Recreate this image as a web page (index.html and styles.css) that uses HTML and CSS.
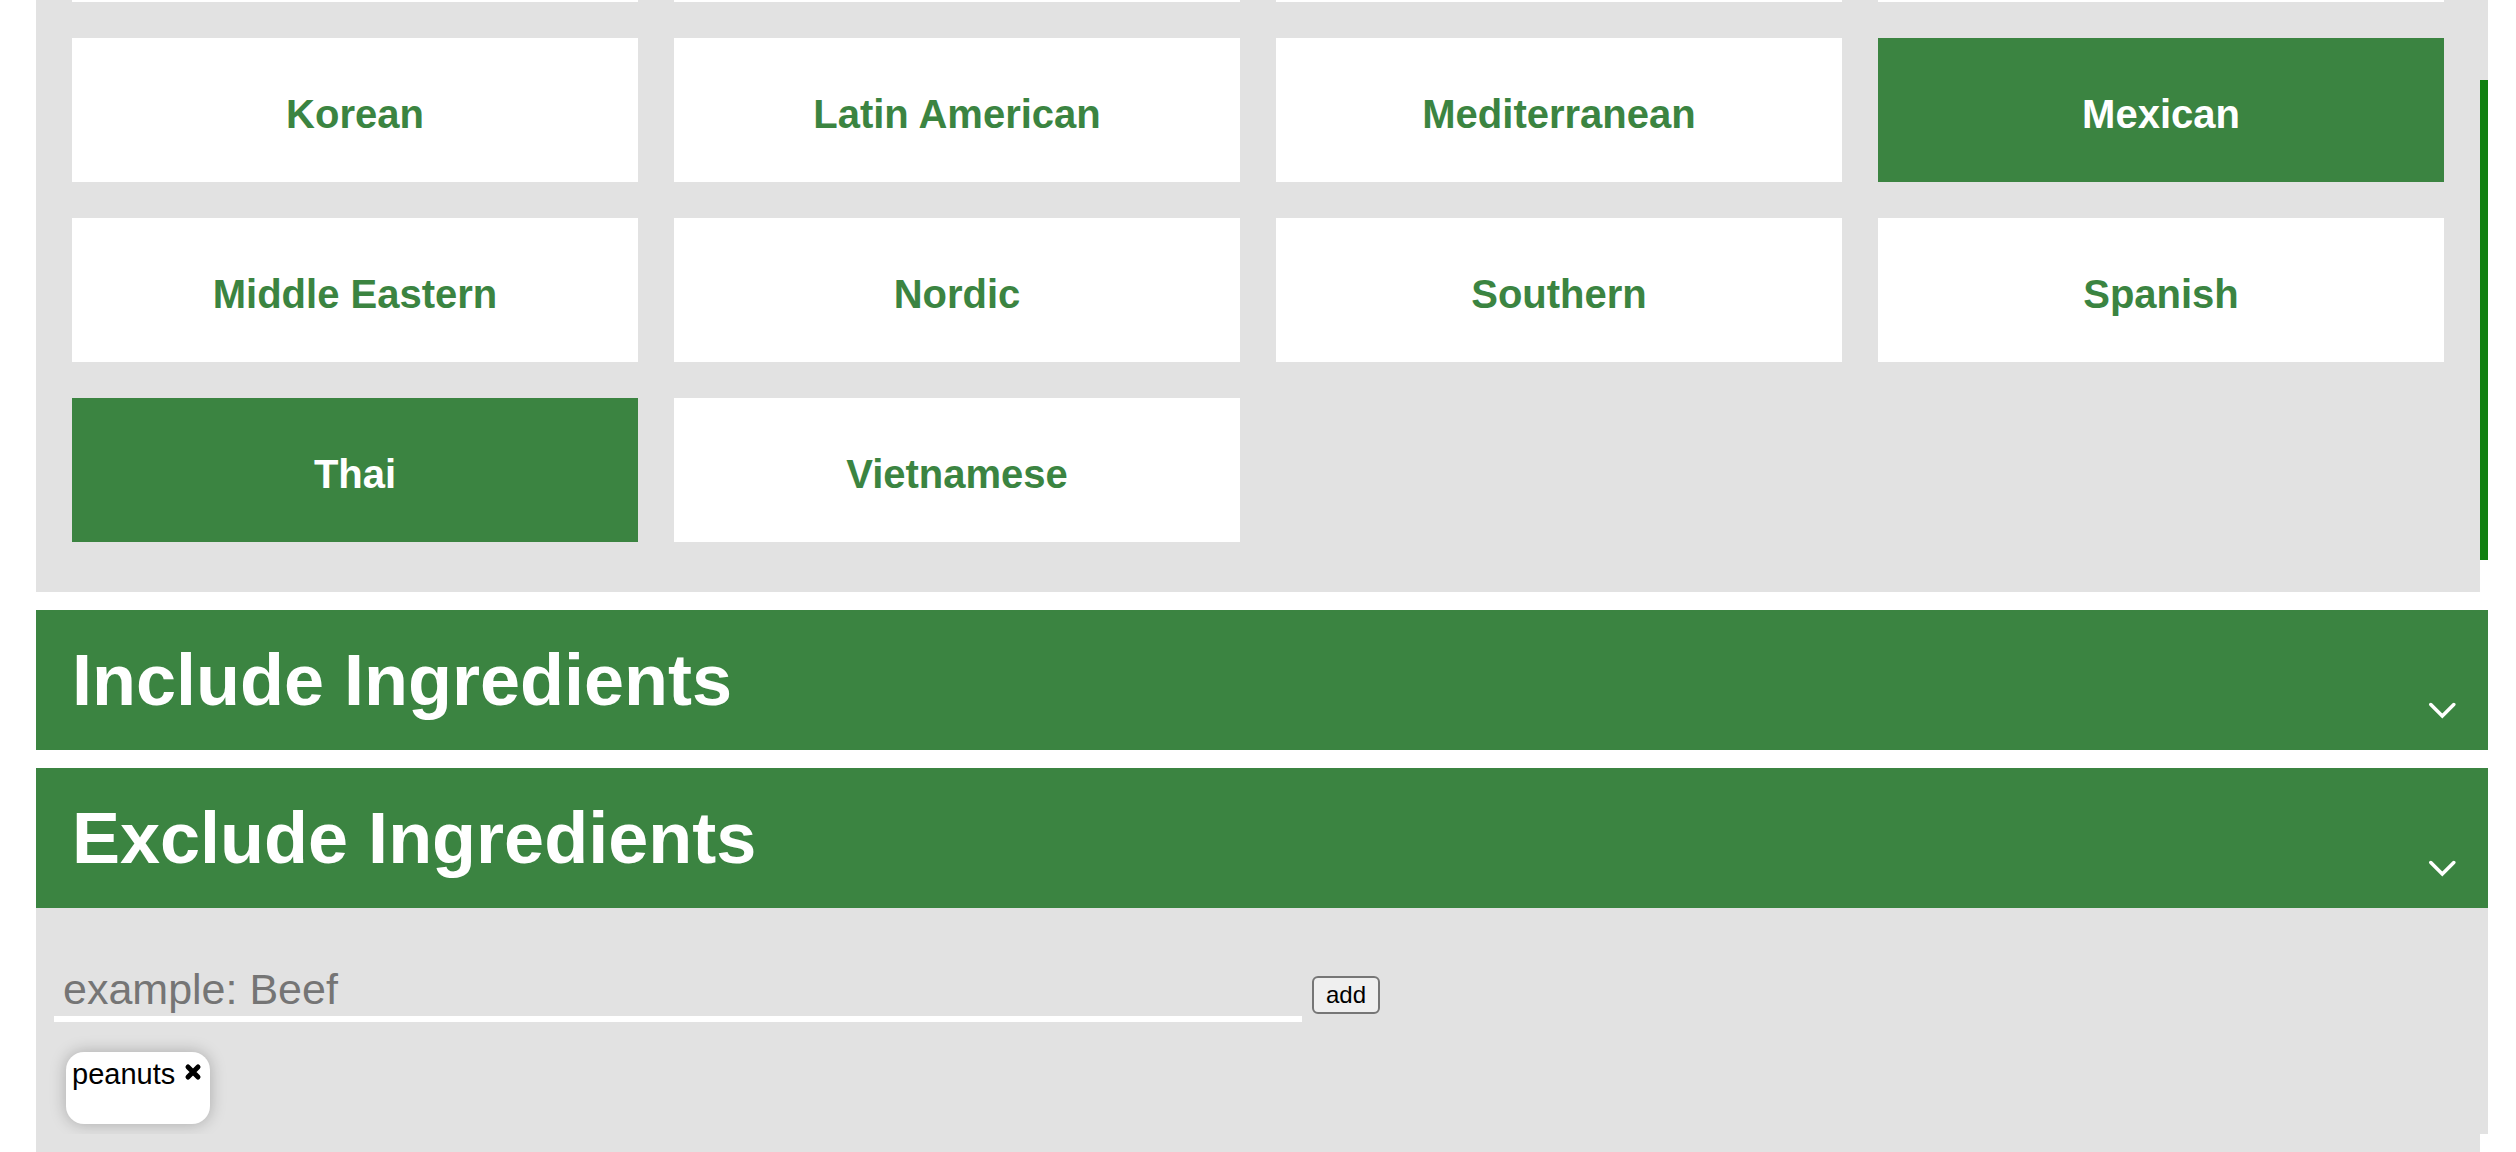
FILE: index.html
```html
<!DOCTYPE html>
<html lang="en">
<head>
<meta charset="utf-8">
<title>Recipe filters</title>
<link rel="stylesheet" href="styles.css">
</head>
<body>
<main class="filters">
  <section class="cuisines">
    <div class="cuisine-grid">
      <div class="card-edge"></div>
      <div class="card-edge"></div>
      <div class="card-edge"></div>
      <div class="card-edge"></div>
      <button type="button" class="card">Korean</button>
      <button type="button" class="card">Latin American</button>
      <button type="button" class="card">Mediterranean</button>
      <button type="button" class="card selected" aria-pressed="true">Mexican</button>
      <button type="button" class="card">Middle Eastern</button>
      <button type="button" class="card">Nordic</button>
      <button type="button" class="card">Southern</button>
      <button type="button" class="card">Spanish</button>
      <button type="button" class="card selected" aria-pressed="true">Thai</button>
      <button type="button" class="card">Vietnamese</button>
    </div>
    <div class="scroll-track"><div class="scroll-thumb"></div></div>
  </section>

  <section>
    <button type="button" class="accordion">
      <span class="accordion-title">Include Ingredients</span>
      <svg class="chevron" viewBox="0 0 28 20" aria-hidden="true"><path d="M2.800 3.500 L14.300 15 L25.800 3.500"/></svg>
    </button>
  </section>

  <section class="exclude">
    <button type="button" class="accordion" aria-expanded="true">
      <span class="accordion-title">Exclude Ingredients</span>
      <svg class="chevron" viewBox="0 0 28 20" aria-hidden="true"><path d="M2.800 3.500 L14.300 15 L25.800 3.500"/></svg>
    </button>
    <div class="exclude-body">
      <form class="add-form">
        <input class="ingredient" type="text" placeholder="example: Beef" aria-label="Ingredient to exclude">
        <button type="button" class="add">add</button>
      </form>
      <div class="chip">
        <span>peanuts</span>
        <button type="button" class="remove" aria-label="Remove">
          <svg class="cross" viewBox="0 0 18 18" aria-hidden="true"><path d="M4 4 L14 14 M14 4 L4 14"/></svg>
        </button>
      </div>
    </div>
    <div class="exclude-foot"></div>
  </section>
</main>
</body>
</html>
```
FILE: styles.css
```css
* {
  box-sizing: border-box;
}

body {
  margin: 0;
  background: #fff;
  font-family: "Liberation Sans", Arial, sans-serif;
}

button {
  font-family: inherit;
}

.filters {
  display: flex;
  flex-direction: column;
  gap: 18px;
  min-height: 100vh;
  padding: 0 28px 0 36px;
}

.cuisines {
  display: flex;
}

.cuisine-grid {
  flex: 1;
  display: grid;
  grid-template-columns: repeat(4, 1fr);
  gap: 36px;
  padding: 0 36px 50px;
  background: #e2e2e2;
}

.card-edge {
  height: 2px;
  background: #fff;
}

.card {
  padding: 53px 16px 45px;
  border: 0;
  background: #fff;
  color: #3b8441;
  font-size: 40px;
  font-weight: bold;
  line-height: 46px;
}

.card.selected {
  background: #3b8441;
  color: #fff;
}

.scroll-track {
  width: 8px;
  padding-top: 80px;
  background: linear-gradient(#e2e2e2 80px, #fff 80px);
}

.scroll-thumb {
  height: 480px;
  background: #108010;
}

.accordion {
  display: flex;
  justify-content: space-between;
  align-items: flex-end;
  width: 100%;
  padding: 29px 32px 29px 36px;
  border: 0;
  background: #3b8441;
  color: #fff;
  text-align: left;
}

.accordion-title {
  font-size: 72px;
  font-weight: bold;
  line-height: 82px;
}

.chevron {
  width: 28px;
  height: 20px;
  fill: none;
  stroke: #fff;
  stroke-width: 3.5;
  stroke-linecap: round;
}

.exclude {
  flex: 1;
  display: flex;
  flex-direction: column;
}

.exclude-body {
  padding: 48px 18px 10px;
  background: #e2e2e2;
  overflow: hidden;
}

.exclude-foot {
  flex: 1;
  margin-right: 8px;
  background: #e2e2e2;
}

.add-form {
  display: flex;
  align-items: flex-end;
  gap: 10px;
}

.ingredient {
  width: 1248px;
  max-width: 80%;
  height: 66px;
  padding: 8px 9px 2px;
  border: 0;
  border-bottom: 6px solid #fff;
  background: transparent;
  font-family: inherit;
  font-size: 43px;
}

.ingredient::placeholder {
  color: #757575;
}

.add {
  height: 38px;
  margin-bottom: 8px;
  padding: 0 12px;
  border: 2px solid #767676;
  border-radius: 6px;
  background: #efefef;
  color: #000;
  font-size: 24px;
}

.chip {
  display: flex;
  align-items: flex-start;
  gap: 9px;
  width: fit-content;
  height: 72px;
  margin: 30px 0 0 12px;
  padding: 6px 8px 0 6px;
  border-radius: 18px;
  background: #fff;
  box-shadow: 0 0 16px rgba(0, 0, 0, 0.25);
  color: #000;
  font-size: 29px;
  line-height: 32px;
}

.remove {
  display: flex;
  padding: 5px 0;
  border: 0;
  background: none;
}

.cross {
  width: 18px;
  height: 18px;
  fill: none;
  stroke: #000;
  stroke-width: 5;
  stroke-linecap: round;
}
```
